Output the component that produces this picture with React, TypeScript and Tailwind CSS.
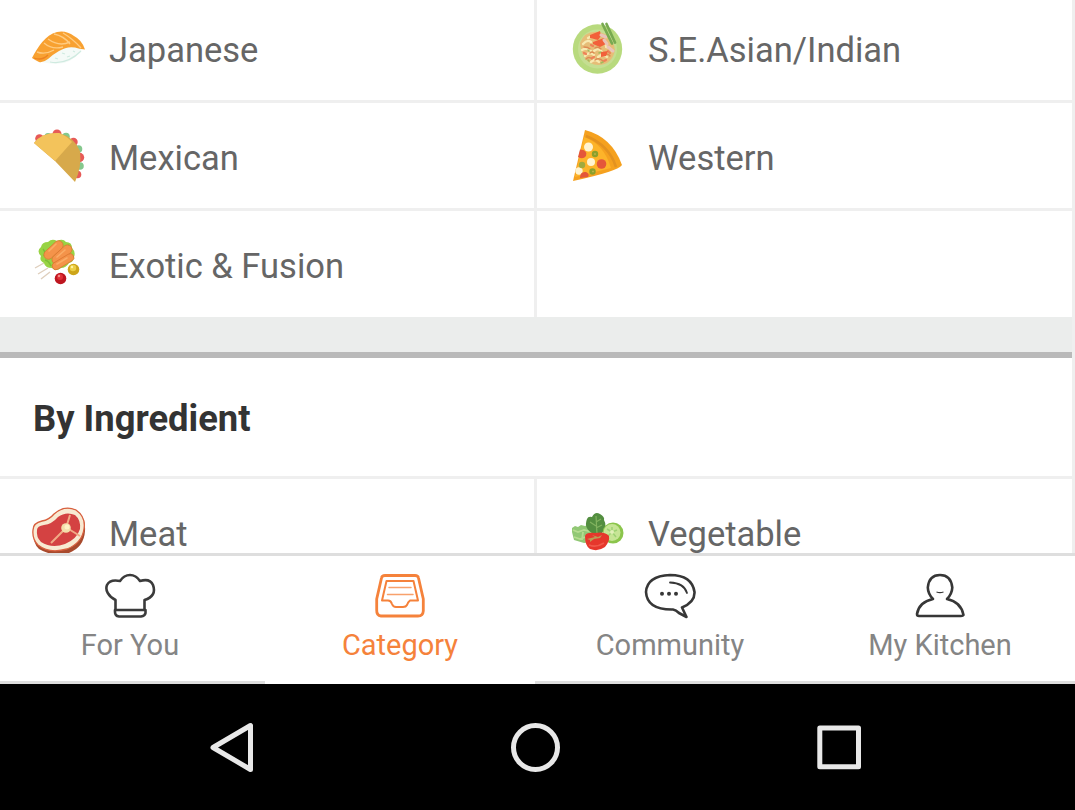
import type { ReactNode } from "react";

function Sushi() {
  return (
    <svg viewBox="29 18 60 60" className="size-[60px] shrink-0">
      <path d="M42 62C47 58 51 53 57 50Q70 42 83 48Q77 59 64 63Q52 65 42 62Z" fill="#f4faf7" />
      <path d="M50 62Q67 65 81 51M55 58l3 1M62 53l3 1M67 57l3-1M73 51l2 1" fill="none" stroke="#cfeae0" strokeWidth="1.2" />
      <path d="M32 58C38 47 45 35 57 32Q66 30 74 36Q82 40 85 49.5Q79 49 75 47.5Q67 46 59 51Q52 55 48 59Q43 63 39 62Q35 60 32 58Z" fill="#f8a131" />
      <path d="M37 52q8 3 17-2M44 43q8 7 19 4M48 39q11 8 22 3M54 34q10 2 16 10M63 33q10 6 18 15" fill="none" stroke="#ffcb80" strokeWidth="1.4" />
      <path d="M34 58q8 3 14-3" fill="none" stroke="#ed8121" strokeWidth="1.3" />
    </svg>
  );
}

function NoodlePlate() {
  return (
    <svg viewBox="567 18 60 60" className="size-[60px] shrink-0">
      <circle cx="597.5" cy="49" r="24.7" fill="#b8da7e" />
      <circle cx="597.5" cy="49" r="19.5" fill="#c5de92" />
      <path d="M580 43Q585 30 599 32Q613 35 615 50Q612 65 598 65Q582 64 580 43Z" fill="#e6bd77" />
      <g fill="none" strokeLinecap="round">
        <path d="M583 44q4-5 8-2M582 50q5-3 9 1M585 56q4-5 9-1M591 62q4-4 8 0M594 51q5-4 8 1M598 57q5-4 9 0M606 47q4 0 6 4M600 43q4-1 6 2M588 38q3-2 6 0" stroke="#f8e9b0" strokeWidth="2.3" />
        <path d="M584 47q4 0 6 2M586 59q3-3 6 0M595 48q3-2 6 1M595 60q4-3 8 1M605 55q3-2 5 1M590 53q2-2 4 0" stroke="#dd8b53" strokeWidth="1.4" />
        <path d="M584 53l2 1M591 45l2 1M592 58l2-1M604 61l2-1M608 51l2 2" stroke="#ef8058" strokeWidth="2.2" />
        <path d="M588 50l1 1M599 53l2-1M601 63l2-1M588 60l1 1" stroke="#a3ba5c" strokeWidth="1.6" />
      </g>
      <path d="M590 35l10-4 1 5-3 4-8-2ZM593 42l11-4 2 6-6 3-7-3ZM601 52l7-1-2 5-5 1Z" fill="#f2603a" />
      <path d="M601 35l5 2M608 47l5 4M604 40l3 4" stroke="#e9c3b9" strokeWidth="3" strokeLinecap="round" />
      <path d="M602.5 24L612 43.5M606.5 24L615 42.5" stroke="#78aa50" strokeWidth="2.7" strokeLinecap="round" />
    </svg>
  );
}

function Taco() {
  return (
    <svg viewBox="29 126 60 60" className="size-[60px] shrink-0">
      <g fill="#e75a57"><circle cx="39.5" cy="138.5" r="4.3" /><circle cx="57" cy="134" r="4.5" /><circle cx="73.5" cy="142" r="4.2" /><circle cx="79.5" cy="157.5" r="4.7" /><circle cx="77.5" cy="174.5" r="3.8" /></g>
      <g fill="#85c88d"><circle cx="48" cy="136.5" r="3.6" /><circle cx="66" cy="136.5" r="3.8" /><circle cx="78.5" cy="149" r="3.8" /><circle cx="80" cy="166" r="3.8" /></g>
      <path d="M34 143Q42 132 59 133Q74 137 80 151Q82 167 75 182L55 161Z" fill="#d7a94b" />
      <path d="M34 143Q42 132 59 133Q67 136 72 142L55 161Z" fill="#f3c35b" />
    </svg>
  );
}

function Pizza() {
  return (
    <svg viewBox="567 126 60 60" className="size-[60px] shrink-0">
      <path d="M585 130Q612 137 622 165Q619 171 573 181Z" fill="#f5a11f" />
      <path d="M584 137Q604 144 611 168L575 177Z" fill="#fdb42a" />
      <path d="M586 136Q609 145 616 167" fill="none" stroke="#e39220" strokeWidth="2.5" />
      <g fill="#fff4d2"><circle cx="588.5" cy="147" r="4.5" /><circle cx="591" cy="162" r="4" /><circle cx="579" cy="171" r="3.7" /></g>
      <path d="M580 149.5Q588 150 586 156Q583 160 578 157Z" fill="#e4573a" />
      <circle cx="601.5" cy="164" r="4.8" fill="#e4573a" />
      <path d="M580 178q0-7 6-6q4 2 2 5Z" fill="#e4573a" />
      <circle cx="595" cy="154" r="3.2" fill="#8ba02b" /><circle cx="582" cy="165" r="3.2" fill="#a1aa3e" /><circle cx="592.5" cy="171.5" r="3.2" fill="#8ba02b" />
      <path d="M594 154h2M592 171.5h2" stroke="#b8b14a" strokeWidth="1.3" />
    </svg>
  );
}

function Skewers() {
  return (
    <svg viewBox="29 234 60 60" className="size-[60px] shrink-0">
      <path d="M35 268l9-5M38 274l10-6M41 279l9-7" stroke="#dfcfbd" strokeWidth="1.4" />
      <path d="M48 242q4-4 9-1q6-3 9 1q6 0 6 6q4 4 2 9q0 5-5 6q-3 5-8 5q-5 4-9 0q-7 0-8-5q-5-2-3-7q-5-5 0-9q1-5 7-5Z" fill="#98d344" />
      <path d="M43 249q3 3 1 7M45 260q4 1 6 6M69 245l-4 3M59 268l-3-3" fill="none" stroke="#7cbe38" strokeWidth="1.5" />
      <g stroke="#d97530" strokeWidth=".7" fill="#f4934a">
        <rect x="42" y="245.5" width="23" height="9" rx="4.5" transform="rotate(-43 53.5 250)" />
        <rect x="50" y="250" width="24" height="9" rx="4.5" transform="rotate(-43 62 254.5)" />
        <rect x="51" y="258" width="24" height="7.5" rx="3.7" transform="rotate(-31 63 261.7)" />
      </g>
      <path d="M49 251l7-7M57 257l8-7M57 264l10-6" stroke="#faac66" strokeWidth="1.6" strokeLinecap="round" />
      <circle cx="60.5" cy="278.5" r="5.8" fill="#be1620" /><circle cx="73.5" cy="269.5" r="5.8" fill="#cda51a" />
      <circle cx="60" cy="277" r="3" fill="#e03036" /><circle cx="73" cy="268" r="3.2" fill="#eccf45" />
      <circle cx="59" cy="276" r="1.2" fill="#f38b89" /><circle cx="72" cy="267" r="1.2" fill="#fff3a3" />
    </svg>
  );
}

function Steak() {
  return (
    <svg viewBox="29 502 60 60" className="size-[60px] shrink-0">
      <path d="M33 530Q33 523 42 521Q49 520 54 514Q64 505 76 510Q86 517 85 531Q84 547 69 553Q52 557 39 549Q33 544 33 530Z" fill="#a84a2d" />
      <path d="M33 530Q33 523 42 521Q49 520 54 514Q64 505 76 510Q86 517 84 529Q82 543 67 549Q49 554 38 545Q32 539 33 530Z" fill="#f8ead2" stroke="#d8603f" strokeWidth="1.3" />
      <path d="M37 530Q37 526 44 525Q52 524 58 517Q66 511 75 515Q81 520 80 529Q77 539 65 544Q52 549 41 542Q36 537 37 530Z" fill="#d44242" />
      <path d="M66 528l4-13M67 528l13 8M65 529L51 543" fill="none" stroke="#f1aa86" strokeWidth="2" />
      <circle cx="66" cy="528" r="4.8" fill="#f3dfab" /><circle cx="67" cy="527" r="2.5" fill="#fff2c6" />
    </svg>
  );
}

function Vegetables() {
  return (
    <svg viewBox="567 502 60 60" className="size-[60px] shrink-0">
      <path d="M572 528l3-2 3 1 3-2 4 1 3-1 4 2 2 8-1 7-9 1-10-3-2-8Z" fill="#91c875" />
      <path d="M573 530l5 2 6-2 8 2M574 537l6 2 8-3M583 532l-1 8" fill="none" stroke="#b6dc91" strokeWidth="1.8" />
      <path d="M594 534Q583 529 587 519Q588 516 592 517Q595 511 600 514Q605 517 604 520Q608 527 602 533Z" fill="#538e40" />
      <path d="M596 516l1 18M596 522l5-3M596 528l6-3M596 526l-6-4" fill="none" stroke="#82b35f" strokeWidth="1.2" />
      <circle cx="613" cy="533" r="10.5" fill="#8bc54c" /><circle cx="612" cy="532.5" r="8.5" fill="#c6e595" />
      <path d="M612 532v-5M612 532l5-2M612 532l4 5M612 532l-4 4M612 532l-5-3" stroke="#9ed174" strokeWidth="1.5" /><circle cx="612" cy="532" r="2" fill="#e1f0b8" />
      <path d="M585 536Q586 532 595 533Q605 531 609 536Q610 541 605 547Q598 552 590 549Q585 546 585 536Z" fill="#e6372c" />
      <path d="M587 539l8-2-3-2 6 2 4-2-2 3-6 1-4 3v-2Z" fill="#bd9c55" /><path d="M589 545q7 3 15-2" fill="none" stroke="#f0594a" strokeWidth="1.5" />
    </svg>
  );
}

function Cell({ label, icon, right = false }: { label?: string; icon?: ReactNode; right?: boolean }) {
  return (
    <div className={right ? "flex h-[105px] items-center pl-[30px]" : "flex h-[106px] w-[537px] shrink-0 items-center border-r-[3px] border-[#efefef] pb-px pl-[29px]"}>
      {icon}
      <span className={`${right ? "ml-[21px]" : "ml-[20px]"} whitespace-nowrap pt-[4px] text-[34.5px] leading-[40px] text-[#666]`}>{label}</span>
    </div>
  );
}

function Row({ children }: { children: ReactNode }) {
  return <div className="flex h-[108px] shrink-0 border-b-[3px] border-[#efefef]">{children}</div>;
}

function ChefHat() {
  return (
    <svg viewBox="104 570 52 50" className="h-[50px] w-[52px]" fill="none" stroke="#3b3b3b" strokeWidth="2.6" strokeLinejoin="round">
      <path d="M115.5 610V600C108 596 105 590 107 585Q110 579 120 581Q124 575 130 575Q136 575 140 581Q150 578 153 585Q157 596 144.5 600V610" />
      <path d="M115 610H145.5V613Q145 616 141 616.5H119Q115 616 115 612Z" />
    </svg>
  );
}

function Tray() {
  return (
    <svg viewBox="374 570 52 50" className="h-[50px] w-[52px]" fill="none" stroke="#f5823b" strokeLinejoin="round" strokeLinecap="round">
      <path d="M385 575.5H415Q418 575.5 418.5 578L423.3 599V611Q423 616 418 616H381Q376.5 615.5 376.7 610V599L381.5 578Q382 575.5 385 575.5Z" strokeWidth="2.8" />
      <path d="M386.5 581H413.5L418 600.5H410Q408 602 407 605Q406 607 403 607H396Q393 607 392 604Q391 600.5 388 600.5H382Z" strokeWidth="2" />
      <path d="M389 587.5H411M387.5 594.5H413" strokeWidth="1.5" opacity=".75" />
    </svg>
  );
}

function Speech() {
  return (
    <svg viewBox="644 570 52 50" className="h-[50px] w-[52px]" fill="none" stroke="#373737" strokeWidth="2.6" strokeLinejoin="round">
      <path d="M682 607.5Q695 602 694.5 592Q692 575 670 575Q647 576 646 592Q647 610 673 609.5Q676 610 679 613L686.5 617Z" />
      <path d="M670 582.5Q684 583 687 593" strokeWidth="1.8" strokeLinecap="round" />
      <g fill="#373737" stroke="none"><circle cx="662" cy="593.8" r="2" /><circle cx="669" cy="593.8" r="2" /><circle cx="676" cy="593.8" r="2" /></g>
    </svg>
  );
}

function Person() {
  return (
    <svg viewBox="914 570 52 50" className="h-[50px] w-[52px]" fill="none" stroke="#373737" strokeWidth="2.6" strokeLinejoin="round">
      <path d="M933 599Q928 594 927.8 587.5Q929 575 940 575Q951 575 952.3 587.5Q952 594 947 599Q961 602 963.5 615Q963 616 961 616H919Q917 616 917 614Q919 602 933 599Z" />
      <path d="M936.5 592Q940 593.2 943.5 592" strokeWidth="1.1" />
    </svg>
  );
}

function Tab({ label, icon, width, active = false }: { label: string; icon: ReactNode; width: string; active?: boolean }) {
  return (
    <div className={`${width} flex shrink-0 flex-col items-center border-b-[3px] pt-[14px] ${active ? "border-white text-[#f5823b]" : "border-[#dedede] text-[#858585]"}`}>
      {icon}
      <span className="mt-[8px] whitespace-nowrap text-[29px] leading-[34px]">{label}</span>
    </div>
  );
}

export default function App() {
  return (
    <main className="flex h-[810px] w-[1075px] flex-col overflow-hidden bg-white font-['Roboto',sans-serif]">
      <section className="flex h-[553px] shrink-0 flex-col overflow-hidden border-r-[3px] border-[#efefef]">
        <div className="-mt-[5px] shrink-0">
          <Row><Cell label="Japanese" icon={<Sushi />} /><Cell right label="S.E.Asian/Indian" icon={<NoodlePlate />} /></Row>
          <Row><Cell label="Mexican" icon={<Taco />} /><Cell right label="Western" icon={<Pizza />} /></Row>
          <div className="flex h-[106px]"><Cell label="Exotic & Fusion" icon={<Skewers />} /></div>
        </div>
        <div className="h-[41px] shrink-0 border-b-[6px] border-b-[#b9b9b9] bg-[#ebedec]" />
        <header className="flex h-[121px] shrink-0 items-center border-b-[3px] border-[#efefef] pl-[33px] pt-[4px]">
          <h1 className="whitespace-nowrap text-[36.4px] font-bold leading-[42px] text-[#333]">By Ingredient</h1>
        </header>
        <Row><Cell label="Meat" icon={<Steak />} /><Cell right label="Vegetable" icon={<Vegetables />} /></Row>
      </section>
      <nav className="flex h-[131px] shrink-0 border-t-[3px] border-[#dedede]">
        <Tab label="For You" icon={<ChefHat />} width="w-[265px] pr-[5px]" />
        <Tab label="Category" icon={<Tray />} width="w-[270px]" active />
        <Tab label="Community" icon={<Speech />} width="w-[270px]" />
        <Tab label="My Kitchen" icon={<Person />} width="w-[270px]" />
      </nav>
      <footer className="flex h-[126px] shrink-0 items-center bg-black pl-[208px]">
        <svg viewBox="208 720 48 54" className="h-[54px] w-[48px]" fill="none" stroke="#e8e8e8" strokeWidth="5" strokeLinejoin="round"><path d="M250.5 725.5V769.5L213 747.5Z" /></svg>
        <svg viewBox="510 722 51 51" className="ml-[254px] size-[51px]" fill="none" stroke="#e8e8e8" strokeWidth="5"><circle cx="535.5" cy="747.5" r="22" /></svg>
        <svg viewBox="816 723 48 48" className="ml-[255px] size-[48px]" fill="none" stroke="#e8e8e8" strokeWidth="5" strokeLinejoin="round"><rect x="819.8" y="728" width="38.7" height="38.7" /></svg>
      </footer>
    </main>
  );
}
